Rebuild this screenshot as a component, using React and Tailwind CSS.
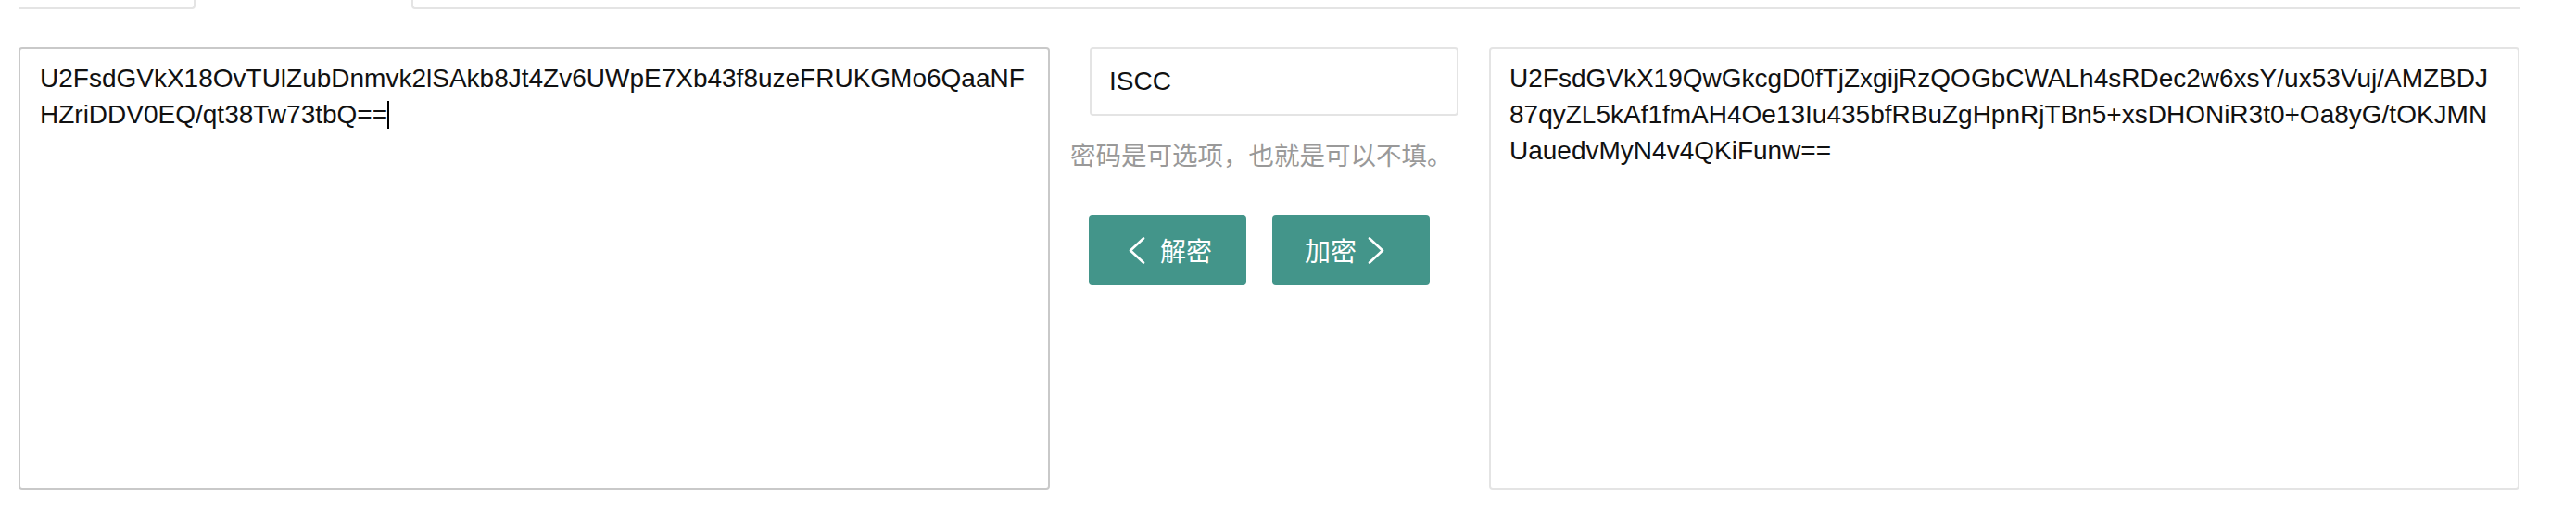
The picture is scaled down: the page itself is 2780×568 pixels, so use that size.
import React, { useState } from "react";

const cipherIn =
  ["U2FsdGVkX18OvTUlZubDnmvk2lSAkb8Jt4Zv6UWpE7Xb43f8uzeFRUKGMo6QaaNF", "HZriDDV0EQ/qt38Tw73tbQ=="];
const cipherOut = [
  "U2FsdGVkX19QwGkcgD0fTjZxgijRzQOGbCWALh4sRDec2w6xsY/ux53Vuj/AMZBDJ",
  "87qyZL5kAf1fmAH4Oe13Iu435bfRBuZgHpnRjTBn5+xsDHONiR3t0+Oa8yG/tOKJMN",
  "UauedvMyN4v4QKiFunw==",
];

const Chevron = ({ dir }) => (
  <svg width="18" height="29" viewBox="0 0 18 29" fill="none" stroke="white" strokeWidth="2.6" strokeLinecap="round" strokeLinejoin="round">
    {dir === "left" ? <polyline points="16,1.5 2,14.5 16,27.5" /> : <polyline points="2,1.5 16,14.5 2,27.5" />}
  </svg>
);

const App = () => {
  const [password, setPassword] = useState("ISCC");

  return (
    <div className="w-full min-h-[568px] bg-white" style={{ fontFamily: '"Liberation Sans", Arial, "Noto Sans CJK SC", sans-serif' }}>
      <div className="w-[2700px] ml-[20px]">
        {/* tab strip, only its lower edge is in view */}
        <div className="flex h-[10px]">
          <div className="w-[191px] border-b-2 border-r-2 border-[#e4e4e4] rounded-br-[4px]" />
          <div className="w-[233px]" />
          <div className="flex-1 border-b-2 border-l-2 border-[#e4e4e4] rounded-bl-[4px]" />
        </div>

        <div className="grid grid-cols-[1113px_474px_1112px] mt-[41px]">
          <div className="h-[478px] border-2 border-[#c9c9c9] rounded-[4px] pl-[21px] pr-[20px] pt-[12px] text-[28px] leading-[39px] text-[#111]">
            {cipherIn.map((line, i) => (
              <div key={i} className="whitespace-nowrap">
                {line}
                {i === cipherIn.length - 1 && <span className="inline-block w-[2px] h-[30px] bg-black align-[-6px]" />}
              </div>
            ))}
          </div>

          <div className="flex flex-col">
            <input
              value={password}
              onChange={(e) => setPassword(e.target.value)}
              className="ml-[43px] w-[398px] h-[74px] border-2 border-[#e4e4e4] rounded-[4px] px-[19px] text-[28px] text-[#111] outline-none"
            />
            <p className="ml-[22px] mt-[21px] text-[27.5px] leading-[40px] text-[#999] whitespace-nowrap" style={{ fontFamily: '"Noto Sans CJK SC", sans-serif' }}>
              密码是可选项，也就是可以不填。
            </p>
            <div className="flex gap-[28px] ml-[42px] mt-[46px]">
              <button className="w-[170px] h-[76px] rounded-[4px] bg-[#43958a] text-white flex items-center justify-center gap-[16px] pl-[6px] text-[28px]" style={{ fontFamily: '"Noto Sans CJK SC", sans-serif' }}>
                <Chevron dir="left" />
                <span>解密</span>
              </button>
              <button className="w-[170px] h-[76px] rounded-[4px] bg-[#43958a] text-white flex items-center justify-center gap-[12px] pr-[14px] text-[28px]" style={{ fontFamily: '"Noto Sans CJK SC", sans-serif' }}>
                <span>加密</span>
                <Chevron dir="right" />
              </button>
            </div>
          </div>

          <div className="h-[478px] border-2 border-[#e4e4e4] rounded-[4px] pl-[20px] pr-[20px] pt-[12px] text-[28px] leading-[39px] text-[#111]">
            {cipherOut.map((line, i) => (
              <div key={i} className="whitespace-nowrap">{line}</div>
            ))}
          </div>
        </div>
      </div>
    </div>
  );
};

export default App;
